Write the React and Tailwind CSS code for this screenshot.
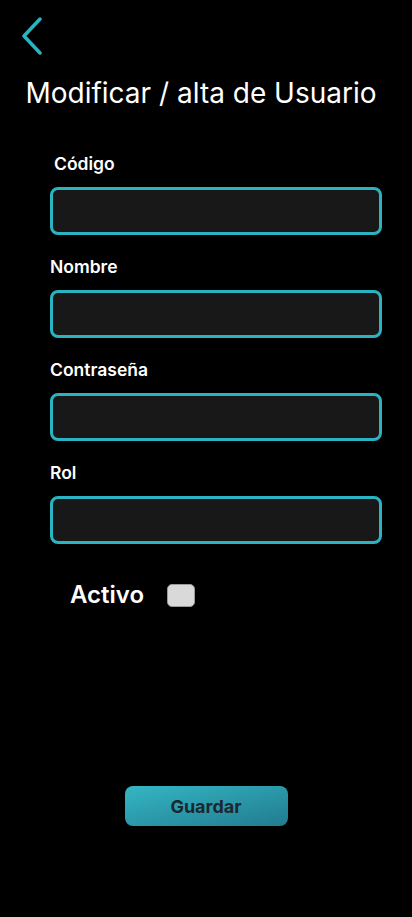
export default function App() {
  const fields = [
    { label: "Código", pad: "pl-1" },
    { label: "Nombre", pad: "" },
    { label: "Contraseña", pad: "" },
    { label: "Rol", pad: "" },
  ];

  return (
    <div
      className="w-[412px] h-[917px] bg-black text-white flex flex-col"
      style={{ fontFamily: "Inter, 'Noto Sans', sans-serif" }}
    >
      {/* Back */}
      <div className="pt-[17px] pl-[20px] h-[56px]">
        <svg width="24" height="38" viewBox="0 0 24 38" fill="none">
          <path d="M20 2 L4 19 L20 36" stroke="#2ab3c1" strokeWidth="3.5" strokeLinecap="round" strokeLinejoin="round" />
        </svg>
      </div>

      <h1 className="text-[28px] leading-[34px] text-center mt-[20px] pr-[10px]">Modificar / alta de Usuario</h1>

      {/* Form */}
      <div className="px-[50px] mt-[43px] flex flex-col gap-[21px]">
        {fields.map((f) => (
          <div key={f.label} className="flex flex-col">
            <label className={`text-[17.5px] leading-[22px] font-semibold ${f.pad}`}>{f.label}</label>
            <input
              type="text"
              className="mt-[12px] h-[48px] w-[332px] rounded-[8px] border-[3px] border-[#2ab3c1] bg-[#181818] outline-none px-3 text-white"
            />
          </div>
        ))}
      </div>

      <div className="flex items-center pl-[70px] mt-[37px]">
        <span className="text-[24px] leading-[28px] font-semibold">Activo</span>
        <span className="ml-[23px] w-[28px] h-[23px] rounded-[5px] bg-[#d9d9d9] border border-[#9a9a9a]" />
      </div>

      <div className="flex justify-center mt-[177px]">
        <button className="w-[163px] h-[40px] rounded-[8px] bg-gradient-to-br from-[#35b6c4] to-[#217c8f] text-[#1b2830] font-bold text-[18px]">
          Guardar
        </button>
      </div>
    </div>
  );
}
